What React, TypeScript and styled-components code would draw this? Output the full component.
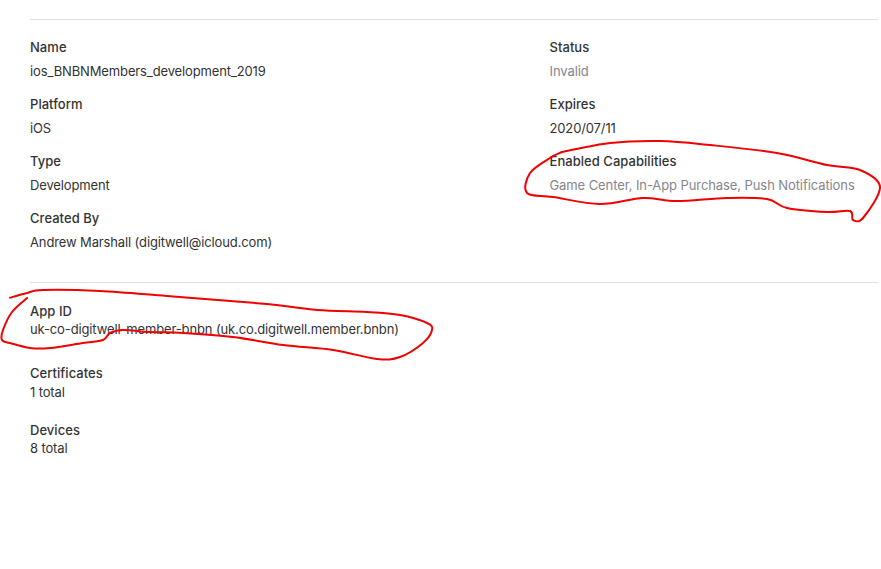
import React from "react";
import styled, { createGlobalStyle } from "styled-components";

const Global = createGlobalStyle`
  html, body { margin: 0; padding: 0; background: #fff; }
  body { font-family: Inter, "Liberation Sans", sans-serif; }
`;

const Page = styled.main`
  position: relative;
  width: 881px;
  height: 569px;
  overflow: hidden;
  box-sizing: border-box;
  padding: 19px 3px 0 30px;
  color: #333;
  font-size: 13px;
  line-height: 18px;
`;

const Section = styled.section`
  border-top: 1px solid #e0e0e0;
`;

const SummaryGrid = styled.div`
  display: grid;
  grid-template-columns: 519.5px 1fr;
  padding: 18px 0 31px;
`;

const Column = styled.div`
  display: flex;
  flex-direction: column;
  gap: 15px;
`;

const Field = styled.div`
  display: flex;
  flex-direction: column;
  gap: 6px;
`;

const LinkedList = styled.div`
  display: flex;
  flex-direction: column;
  padding-top: 19px;
`;

const LinkedField = styled.div<{ $gap: number; $after: number }>`
  display: flex;
  flex-direction: column;
  gap: ${(p) => p.$gap}px;
  margin-bottom: ${(p) => p.$after}px;
`;

const Label = styled.div`
  font-weight: 500;
  color: #333;
  letter-spacing: 0.04px;
`;

const Value = styled.div<{ $muted?: boolean }>`
  color: ${(p) => (p.$muted ? "#86868b" : "#333")};
  font-weight: 400;
  letter-spacing: ${(p) => (p.$muted ? "-0.09px" : "-0.13px")};
`;

const Scribble = styled.svg`
  position: absolute;
  left: 0;
  top: 0;
  pointer-events: none;
`;

const smooth = (pts: number[][]): string => {
  const n = pts.length;
  const at = (i: number) => pts[Math.max(0, Math.min(n - 1, i))];
  let d = `M${pts[0][0]} ${pts[0][1]}`;
  for (let i = 0; i < n - 1; i++) {
    const [p0, p1, p2, p3] = [at(i - 1), at(i), at(i + 1), at(i + 2)];
    d += ` C${(p1[0] + (p2[0] - p0[0]) / 6).toFixed(1)} ${(p1[1] + (p2[1] - p0[1]) / 6).toFixed(1)} ${(p2[0] - (p3[0] - p1[0]) / 6).toFixed(1)} ${(p2[1] - (p3[1] - p1[1]) / 6).toFixed(1)} ${p2[0]} ${p2[1]}`;
  }
  return d;
};

const appIdStroke = [
  [10, 297.7], [27, 293], [43, 290], [100, 291], [167, 296], [267, 304], [317, 310], [367, 312],
  [400, 315], [427, 323], [432, 330], [423, 343], [400, 357], [377, 359], [333, 350], [283, 345],
  [233, 337], [183, 333], [150, 332], [123, 330], [110, 333], [103, 340], [83, 343], [50, 348],
  [30, 348], [10, 343], [2, 340], [3, 330], [12, 312], [27, 298],
];

const capabilityStroke = [
  [562, 152], [550, 158], [530, 173], [527, 193], [553, 197], [600, 204], [643, 198], [677, 201],
  [727, 198], [767, 199], [787, 208], [827, 212], [850, 211], [853, 220], [863, 218], [880, 187],
  [860, 170], [827, 165], [777, 153], [710, 145], [660, 141], [610, 143], [562, 152],
];

const left = [
  { label: "Name", value: "ios_BNBNMembers_development_2019" },
  { label: "Platform", value: "iOS" },
  { label: "Type", value: "Development" },
  { label: "Created By", value: "Andrew Marshall (digitwell@icloud.com)" },
];

const right = [
  { label: "Status", value: "Invalid", muted: true },
  { label: "Expires", value: "2020/07/11" },
  { label: "Enabled Capabilities", value: "Game Center, In-App Purchase, Push Notifications", muted: true },
];

export default function App() {
  return (
    <Page>
      <Global />
      <Section>
        <SummaryGrid>
          <Column>
            {left.map((f) => (
              <Field key={f.label}>
                <Label>{f.label}</Label>
                <Value>{f.value}</Value>
              </Field>
            ))}
          </Column>
          <Column>
            {right.map((f) => (
              <Field key={f.label}>
                <Label>{f.label}</Label>
                <Value $muted={f.muted}>{f.value}</Value>
              </Field>
            ))}
          </Column>
        </SummaryGrid>
      </Section>
      <Section>
        <LinkedList>
          <LinkedField $gap={0} $after={26}>
            <Label>App ID</Label>
            <Value>uk-co-digitwell-member-bnbn (uk.co.digitwell.member.bnbn)</Value>
          </LinkedField>
          <LinkedField $gap={1} $after={20}>
            <Label>Certificates</Label>
            <Value>1 total</Value>
          </LinkedField>
          <LinkedField $gap={0} $after={0}>
            <Label>Devices</Label>
            <Value>8 total</Value>
          </LinkedField>
        </LinkedList>
      </Section>
      <Scribble width="881" height="569" viewBox="0 0 881 569" fill="none" stroke="#f00000" strokeWidth="2" strokeLinecap="round" strokeLinejoin="round">
        <path d={smooth(appIdStroke)} />
        <path d={smooth(capabilityStroke)} />
      </Scribble>
    </Page>
  );
}
